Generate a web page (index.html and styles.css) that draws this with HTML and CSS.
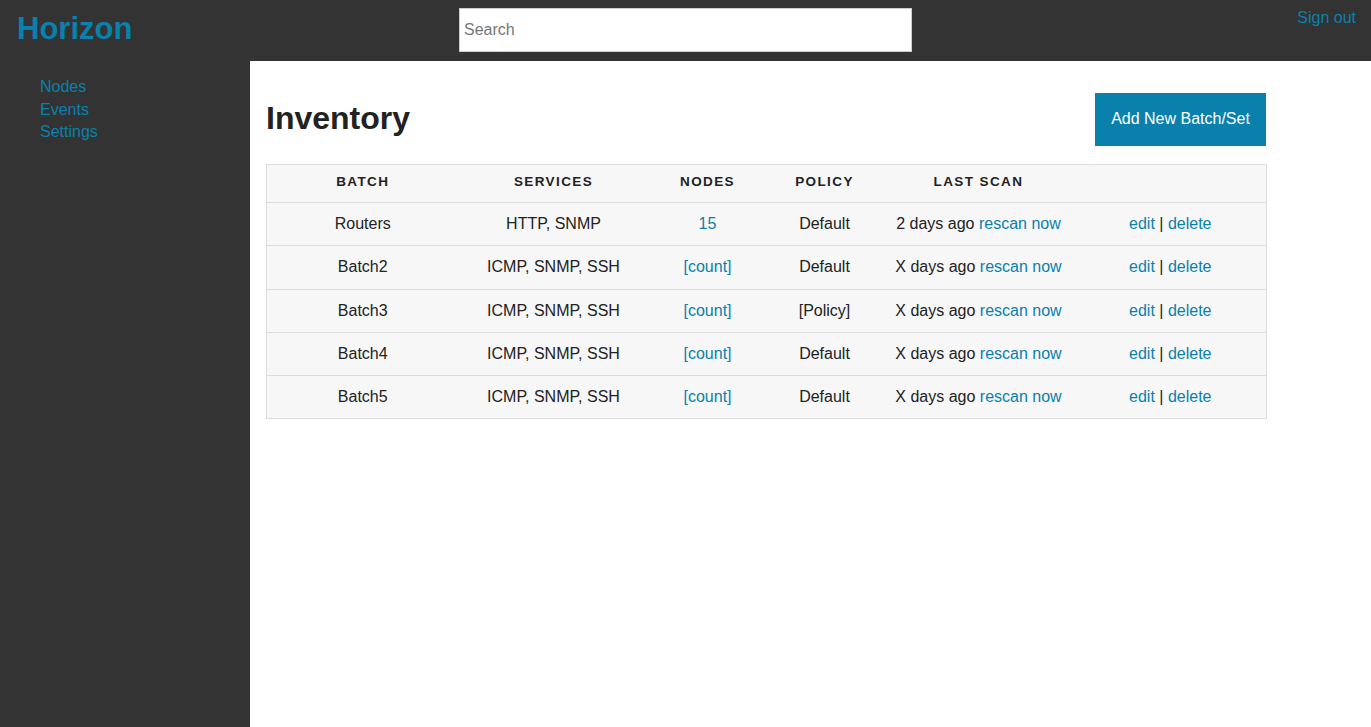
FILE: index.html
```html
<!DOCTYPE html>
<html>
<head>
<meta charset="utf-8">
<link rel="stylesheet" href="styles.css">
</head>
<body>
<header class="topbar">
  <a class="logo" href="#">Horizon</a>
  <input class="search" type="text" placeholder="Search">
  <a class="signout" href="#">Sign out</a>
</header>
<div class="layout">
  <nav class="sidebar">
    <a href="#">Nodes</a>
    <a href="#">Events</a>
    <a href="#">Settings</a>
  </nav>
  <main class="main">
    <div class="title-row">
      <h1>Inventory</h1>
      <button class="add-btn">Add New Batch/Set</button>
    </div>
    <table class="inv">
      <colgroup>
        <col class="c1"><col class="c2"><col class="c3"><col class="c4"><col class="c5"><col class="c6">
      </colgroup>
      <thead>
        <tr><th>Batch</th><th>Services</th><th>Nodes</th><th>Policy</th><th>Last Scan</th><th></th></tr>
      </thead>
      <tbody>
        <tr><td>Routers</td><td>HTTP, SNMP</td><td><a href="#">15</a></td><td>Default</td><td>2 days ago <a href="#">rescan now</a></td><td><a href="#">edit</a> | <a href="#">delete</a></td></tr>
        <tr><td>Batch2</td><td>ICMP, SNMP, SSH</td><td><a href="#">[count]</a></td><td>Default</td><td>X days ago <a href="#">rescan now</a></td><td><a href="#">edit</a> | <a href="#">delete</a></td></tr>
        <tr><td>Batch3</td><td>ICMP, SNMP, SSH</td><td><a href="#">[count]</a></td><td>[Policy]</td><td>X days ago <a href="#">rescan now</a></td><td><a href="#">edit</a> | <a href="#">delete</a></td></tr>
        <tr><td>Batch4</td><td>ICMP, SNMP, SSH</td><td><a href="#">[count]</a></td><td>Default</td><td>X days ago <a href="#">rescan now</a></td><td><a href="#">edit</a> | <a href="#">delete</a></td></tr>
        <tr><td>Batch5</td><td>ICMP, SNMP, SSH</td><td><a href="#">[count]</a></td><td>Default</td><td>X days ago <a href="#">rescan now</a></td><td><a href="#">edit</a> | <a href="#">delete</a></td></tr>
      </tbody>
    </table>
  </main>
</div>
</body>
</html>
```
FILE: styles.css
```css
* { box-sizing: border-box; }
html, body { margin: 0; padding: 0; height: 100%; }
body {
  font-family: "Liberation Sans", Arial, sans-serif;
  font-size: 16px;
  color: #222;
  background: #333;
  display: flex;
  flex-direction: column;
}
a { color: #0a80ac; text-decoration: none; }

.topbar {
  height: 61px;
  background: #333;
  display: flex;
  align-items: flex-start;
  flex-shrink: 0;
}
.logo {
  font-size: 31px;
  font-weight: bold;
  margin: 12px 0 0 17px;
  width: 442px;
  line-height: 34px;
  color: #0a80ac;
}
.search {
  width: 453px;
  height: 44px;
  margin-top: 8px;
  border: 1px solid #ccc;
  padding: 0 4px;
  font-family: "Liberation Sans", Arial, sans-serif;
  font-size: 16px;
  color: #222;
  background: #fff;
  outline: none;
}
.search::placeholder { color: #777; }
.signout {
  margin-left: auto;
  margin-right: 15px;
  margin-top: 9px;
  line-height: 18px;
  font-size: 16px;
}

.layout {
  flex: 1;
  display: flex;
}
.sidebar {
  width: 250px;
  flex-shrink: 0;
  background: #333;
  display: flex;
  flex-direction: column;
  padding: 15px 0 0 40px;
}
.sidebar a { line-height: 22.5px; font-size: 16px; }

.main {
  flex: 1;
  background: #fff;
  padding: 32px 0 0 16px;
}
.title-row {
  width: 1000px;
  display: flex;
  justify-content: space-between;
  align-items: center;
  height: 53px;
}
.title-row h1 {
  margin: 0 0 2px 0;
  font-size: 32px;
  font-weight: bold;
  color: #222;
}
.add-btn {
  width: 171px;
  height: 53px;
  background: #0a80ac;
  color: #fff;
  border: 0;
  font-family: "Liberation Sans", Arial, sans-serif;
  font-size: 16px;
  font-weight: 500;
  padding: 0 0 2px 0;
}

.inv {
  margin-top: 18px;
  width: 1000px;
  border-collapse: collapse;
  background: #f7f7f7;
  border: 1px solid #ddd;
  table-layout: fixed;
}
.c1 { width: 192px; }
.c2 { width: 190px; }
.c3 { width: 118px; }
.c4 { width: 116px; }
.c5 { width: 192px; }
.c6 { width: 192px; }
.inv th {
  height: 38px;
  font-size: 13.5px;
  font-weight: bold;
  text-transform: uppercase;
  letter-spacing: 1.4px;
  text-align: center;
  color: #222;
  border-bottom: 1px solid #ddd;
  padding: 0 0 5px 0;
}
.inv td {
  height: 43.3px;
  text-align: center;
  border-bottom: 1px solid #ddd;
  padding: 0;
  font-size: 16px;
}
```
